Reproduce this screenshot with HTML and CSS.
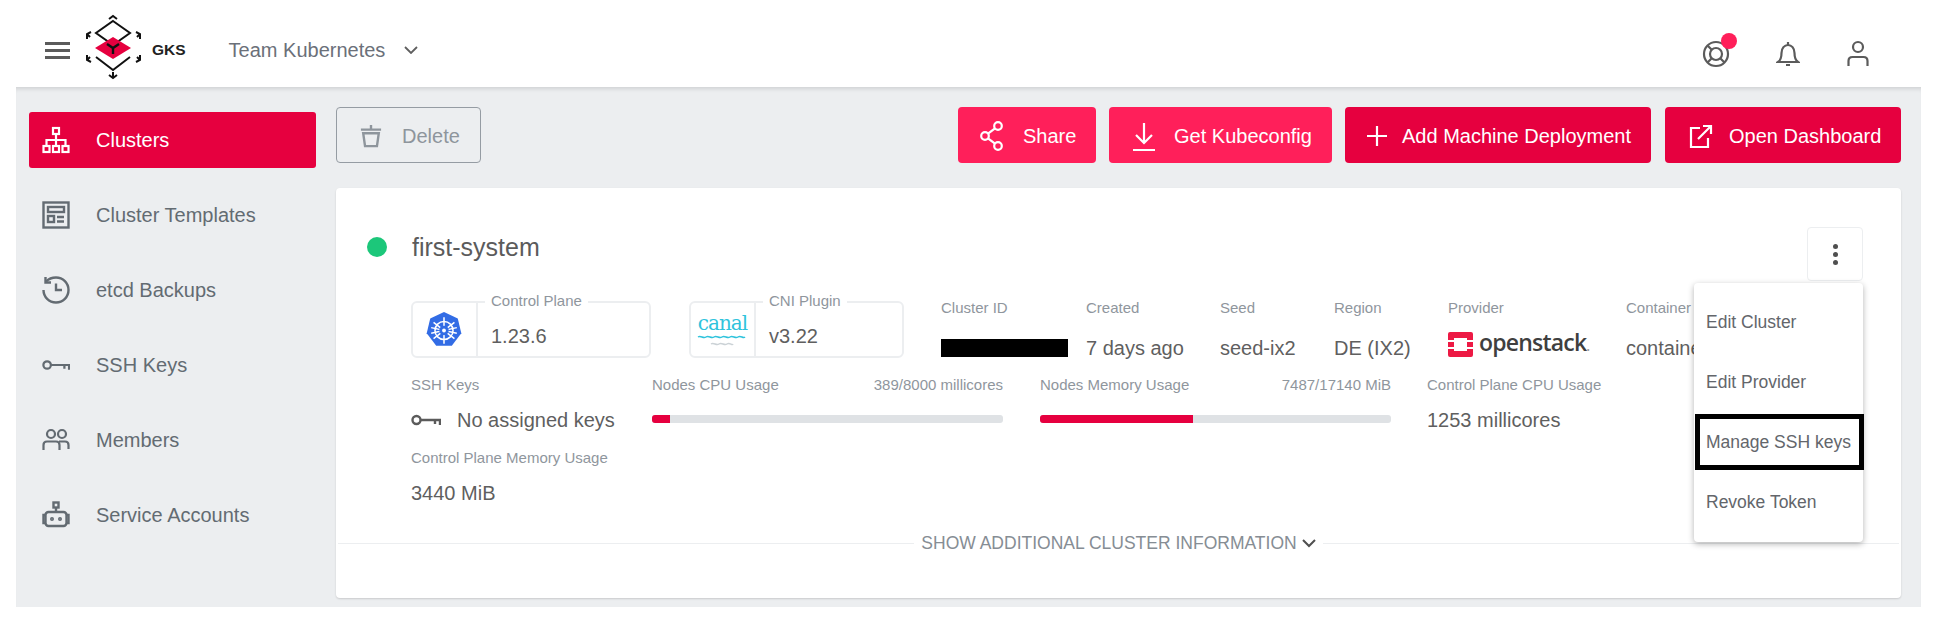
FILE: index.html
```html
<!DOCTYPE html>
<html lang="en">

<head>
    <meta charset="utf-8">
    <meta name="viewport" content="width=device-width, initial-scale=1.0">
    <title>Clusters - GKS</title>
    <link rel="stylesheet" href="styles.css">
</head>

<body>
    <header class="topbar">
        <div class="burger"><span></span><span></span><span></span></div>
        <svg class="logo" viewBox="85 16 60 68" width="60" height="68" fill="none" stroke="#111" stroke-width="2">
            <path d="M113 24l17 12-17 12-17-12z" />
            <path d="M96 60l17 13 17-13" />
            <path d="M113 40l18 11-18 11-18-11z" fill="#e6003f" stroke="none" />
            <path d="M107 47l6 4 6-4M113 51v6" stroke-width="2.4" />
            <path d="M109 22l4-3 4 3" />
            <path d="M113 75v6M109 78l4 3 4-3" />
            <path d="M91 35l-4 2v5M87 37l3 3" />
            <path d="M136 35l4 2v5M140 37l-3 3" />
            <path d="M87 58v5l4 2M87 63l3-3" />
            <path d="M140 58v5l-4 2M140 63l-3-3" />
        </svg>
        <span class="brand">GKS</span>
        <span class="team">Team Kubernetes</span>
        <svg class="team-caret" viewBox="0 0 14 8" width="14" height="8" fill="none" stroke="#5f5f5f" stroke-width="1.8">
            <path d="M1 1l6 6 6-6" />
        </svg>
        <div class="top-icons">
            <div class="help">
                <svg viewBox="0 0 28 28" width="28" height="28" fill="none" stroke="#5b5b5b" stroke-width="2.2">
                    <circle cx="14" cy="14" r="12" />
                    <circle cx="14" cy="14" r="6" />
                    <path d="M5.500 5.500l4.500 4.500M22.500 22.500L18 18M5.500 22.500L10 18" />
                </svg>
                <span class="help-dot"></span>
            </div>
            <svg viewBox="0 0 24 28" width="24" height="28" fill="none" stroke="#5b5b5b" stroke-width="2.200">
                <path d="M2 22c3-2 3.500-5 3.500-9 0-5 3-8 6.500-8s6.500 3 6.500 8c0 4 .5 7 3.500 9z" />
                <path d="M12 2v3M10 25h4" />
            </svg>
            <svg viewBox="0 0 24 28" width="24" height="28" fill="none" stroke="#5b5b5b" stroke-width="2.200">
                <circle cx="12" cy="7" r="5" />
                <path d="M2.500 26v-5c0-2.500 1.500-4 4-4h11c2.500 0 4 1.500 4 4v5" />
            </svg>
        </div>
    </header>

    <div class="layout">
        <nav class="sidebar">
            <a class="nav-item active">
                <svg viewBox="0 0 28 28" width="28" height="28" fill="none" stroke="currentColor" stroke-width="2.200">
                    <rect x="11" y="2" width="6" height="6" />
                    <rect x="1.500" y="20" width="6" height="6" />
                    <rect x="11" y="20" width="6" height="6" />
                    <rect x="20.500" y="20" width="6" height="6" />
                    <path d="M14 8v12M4.500 20v-6h19v6" />
                </svg>
                Clusters
            </a>
            <a class="nav-item">
                <svg viewBox="0 0 28 28" width="28" height="28" fill="none" stroke="currentColor" stroke-width="2.400">
                    <rect x="1.500" y="1.500" width="25" height="25" />
                    <rect x="6" y="6" width="16" height="5" />
                    <rect x="6" y="15" width="6" height="6" />
                    <path d="M15 16h7M15 20.500h7" />
                </svg>
                Cluster Templates
            </a>
            <a class="nav-item">
                <svg viewBox="0 0 28 28" width="28" height="28" fill="none" stroke="currentColor" stroke-width="2.400">
                    <path d="M4 5.500C6.500 3 10 1.500 14 1.500 21 1.500 26.500 7 26.500 14S21 26.500 14 26.500 1.500 21 1.500 14" />
                    <path d="M3.500 1v5.500H9" />
                    <path d="M14 7.500V14h6" />
                </svg>
                etcd Backups
            </a>
            <a class="nav-item">
                <svg viewBox="0 0 30 14" width="30" height="14" fill="none" stroke="currentColor" stroke-width="2.400">
                    <circle cx="5.500" cy="7" r="4" />
                    <path d="M9.500 7H29v5M24 7v4" />
                </svg>
                SSH Keys
            </a>
            <a class="nav-item">
                <svg viewBox="0 0 28 24" width="28" height="24" fill="none" stroke="currentColor" stroke-width="2.200">
                    <circle cx="9" cy="6" r="4" />
                    <circle cx="20" cy="6" r="4" />
                    <path d="M1.500 22v-5c0-2 1.500-3.500 3.500-3.500h9c2 0 3.500 1.500 3.500 3.500v5" />
                    <path d="M17 13.500h6c2 0 3.500 1.500 3.500 3.500v4" />
                </svg>
                Members
            </a>
            <a class="nav-item">
                <svg viewBox="0 0 28 28" width="28" height="28" fill="none" stroke="currentColor" stroke-width="2.400">
                    <rect x="11.500" y="1.500" width="5" height="5" />
                    <path d="M14 6.500V11" />
                    <rect x="3.500" y="11" width="21" height="14" rx="3" />
                    <path d="M3.500 14H1.500v8h2M24.500 14h2v8h-2" />
                    <circle cx="10" cy="18" r=".8" />
                    <circle cx="18" cy="18" r=".8" />
                </svg>
                Service Accounts
            </a>
        </nav>

        <main class="content">
            <div class="toolbar">
                <button class="btn btn-delete">
                    <svg viewBox="0 0 24 26" width="22" height="24" fill="none" stroke="currentColor" stroke-width="2.600">
                        <path d="M1 6h22M12 1v5" />
                        <path d="M3.500 10l2 14h13l2-14z" />
                    </svg>
                    Delete
                </button>
                <div class="actions">
                    <button class="btn btn-light btn-share">
                        <svg viewBox="0 0 24 30" width="24" height="30" fill="none" stroke="currentColor" stroke-width="2.200">
                            <circle cx="5" cy="15" r="3.800" />
                            <circle cx="18" cy="5" r="3.800" />
                            <circle cx="18" cy="25" r="3.800" />
                            <path d="M8 12.700l7-5.400M8 17.300l7 5.400" />
                        </svg>
                        Share
                    </button>
                    <button class="btn btn-light btn-kube">
                        <svg viewBox="0 0 24 30" width="24" height="30" fill="none" stroke="currentColor" stroke-width="2.200">
                            <path d="M12 2v20M4 14l8 8 8-8M1 29h22" />
                        </svg>
                        Get Kubeconfig
                    </button>
                    <button class="btn btn-dark btn-add">
                        <svg viewBox="0 0 22 22" width="22" height="22" fill="none" stroke="currentColor" stroke-width="2.200">
                            <path d="M11 1v20M1 11h20" />
                        </svg>
                        Add Machine Deployment
                    </button>
                    <button class="btn btn-dark btn-open">
                        <svg viewBox="0 0 24 24" width="24" height="24" fill="none" stroke="currentColor" stroke-width="2.200">
                            <path d="M11 4H2v19h17v-9" />
                            <path d="M9 15L22 2M14 2h8v8" />
                        </svg>
                        Open Dashboard
                    </button>
                </div>
            </div>

            <section class="card">
                <div class="title-row">
                    <span class="status-dot"></span>
                    <h1>first-system</h1>
                    <button class="kebab"><span></span><span></span><span></span></button>
                </div>

                <div class="row row-one">
                    <div class="tag-box">
                        <span class="tag-label">Control Plane</span>
                        <div class="tag-logo">
                            <svg viewBox="0 0 40 40" width="38" height="38">
                                <path d="M20 1l14.500 7 3.700 15.500-10 13H11.800l-10-13L5.500 8z" fill="#326ce5" />
                                <g fill="none" stroke="#fff" stroke-width="1.600">
                                    <circle cx="20" cy="20.500" r="9.500" />
                                    <path d="M20 6.500v28M9 12l22 17M31 12L9 29M6.500 23.500l27-6M33.500 23.500l-27-6" />
                                </g>
                                <circle cx="20" cy="20.500" r="5" fill="#326ce5" />
                                <circle cx="20" cy="20.500" r="2" fill="#fff" />
                            </svg>
                        </div>
                        <span class="tag-value">1.23.6</span>
                    </div>
                    <div class="tag-box">
                        <span class="tag-label">CNI Plugin</span>
                        <div class="tag-logo canal">
                            <span class="canal-name">canal</span>
                            <svg viewBox="0 0 50 14" width="50" height="14" fill="none" stroke-width="1.500">
                                <path d="M1 3c3-2 5 2 8 0s5 2 8 0 5 2 8 0 5 2 8 0 5 2 8 0 5 2 7 0" stroke="#2fc3dc" />
                                <path d="M14 10c3-2 5 2 8 0s5 2 8 0 5 2 6 0" stroke="#cbd2d6" />
                            </svg>
                        </div>
                        <span class="tag-value">v3.22</span>
                    </div>
                    <div class="info">
                        <span class="label">Cluster ID</span>
                        <span class="value redacted"></span>
                    </div>
                    <div class="info">
                        <span class="label">Created</span>
                        <span class="value">7 days ago</span>
                    </div>
                    <div class="info">
                        <span class="label">Seed</span>
                        <span class="value">seed-ix2</span>
                    </div>
                    <div class="info">
                        <span class="label">Region</span>
                        <span class="value">DE (IX2)</span>
                    </div>
                    <div class="info">
                        <span class="label">Provider</span>
                        <div class="openstack">
                            <svg viewBox="0 0 25 25" width="25" height="25">
                                <path d="M2 0h21a2 2 0 0 1 2 2v6h-6V6H6v2H0V2a2 2 0 0 1 2-2zM0 10h6v5H0zM19 10h6v5h-6zM0 17h6v2h13v-2h6v6a2 2 0 0 1-2 2H2a2 2 0 0 1-2-2z" fill="#ed1944" />
                            </svg>
                            <span>openstack<small>.</small></span>
                        </div>
                    </div>
                    <div class="info">
                        <span class="label">Container</span>
                        <span class="value">containerd</span>
                    </div>
                </div>

                <div class="row row-two">
                    <div class="info">
                        <span class="label">SSH Keys</span>
                        <span class="value ssh-value">
                            <svg viewBox="0 0 30 14" width="30" height="14" fill="none" stroke="#5b5b5b" stroke-width="2.400">
                                <circle cx="5.500" cy="7" r="4" />
                                <path d="M9.500 7H29v5M24 7v4" />
                            </svg>
                            No assigned keys
                        </span>
                    </div>
                    <div class="usage">
                        <div class="usage-head">
                            <span class="label">Nodes CPU Usage</span>
                            <span class="label">389/8000 millicores</span>
                        </div>
                        <div class="bar"><div class="bar-fill" style="width: 5%"></div></div>
                    </div>
                    <div class="usage">
                        <div class="usage-head">
                            <span class="label">Nodes Memory Usage</span>
                            <span class="label">7487/17140 MiB</span>
                        </div>
                        <div class="bar"><div class="bar-fill" style="width: 43.700%"></div></div>
                    </div>
                    <div class="info">
                        <span class="label">Control Plane CPU Usage</span>
                        <span class="value">1253 millicores</span>
                    </div>
                </div>

                <div class="row row-three">
                    <div class="info">
                        <span class="label">Control Plane Memory Usage</span>
                        <span class="value">3440 MiB</span>
                    </div>
                </div>

                <div class="more">
                    <span>SHOW ADDITIONAL CLUSTER INFORMATION</span>
                    <svg viewBox="0 0 14 9" width="14" height="9" fill="none" stroke="#4f4f4f" stroke-width="2">
                        <path d="M1 1l6 6 6-6" />
                    </svg>
                </div>

                <ul class="menu">
                    <li>Edit Cluster</li>
                    <li>Edit Provider</li>
                    <li class="marked">Manage SSH keys</li>
                    <li>Revoke Token</li>
                </ul>
            </section>
        </main>
    </div>
</body>

</html>
```

FILE: styles.css
```css
* {
    box-sizing: border-box;
}

html,
body {
    height: 100%;
}

body {
    margin: 0;
    overflow: hidden;
    background-color: #fff;
    color: #5f5f5f;
    font-family: "Liberation Sans", Arial, sans-serif;
}

/* top bar */
.topbar {
    display: flex;
    align-items: center;
    height: 87px;
    padding: 13px 0 0 45px;
    background-color: #fff;
}

.burger {
    display: flex;
    flex-direction: column;
    gap: 4px;
    width: 25px;
}

.burger span {
    height: 3px;
    background-color: #5b5b5b;
}

.logo {
    margin-left: 15px;
    margin-top: -7px;
}

.brand {
    margin-left: 7px;
    color: #222;
    font-size: 15.500px;
    font-weight: bold;
}

.team {
    margin-left: 43px;
    color: #6b7079;
    font-size: 20px;
}

.team-caret {
    margin-left: 19px;
}

.top-icons {
    display: flex;
    align-items: center;
    gap: 46px;
    margin-left: auto;
    margin-top: 7px;
    padding-right: 65px;
}

.help {
    position: relative;
    display: flex;
}

.help-dot {
    position: absolute;
    top: -7px;
    right: -7px;
    width: 16px;
    height: 16px;
    border-radius: 50%;
    background-color: #ff1f5a;
}

/* page */
.layout {
    display: flex;
    height: 520px;
    margin: 0 14px 0 16px;
    background-color: #eceef0;
    box-shadow: inset 0 5px 4px -3px rgba(0, 0, 0, 0.12);
}

.sidebar {
    display: flex;
    flex-direction: column;
    gap: 19px;
    width: 300px;
    padding: 25px 0 0 13px;
    flex-shrink: 0;
}

.nav-item {
    display: flex;
    align-items: center;
    height: 56px;
    padding-left: 13px;
    color: #636b72;
    font-size: 20px;
    border-radius: 3px;
}

.nav-item svg {
    width: 28px;
    margin-right: 26px;
}

.active {
    background-color: #e6003f;
    color: #fff;
}

.content {
    flex: 1;
    padding: 20px 20px 0 20px;
}

.toolbar {
    display: flex;
    justify-content: space-between;
}

.actions {
    display: flex;
    gap: 13px;
}

.btn {
    display: flex;
    align-items: center;
    height: 56px;
    padding-top: 3px;
    border: 0;
    border-radius: 4px;
    color: #fff;
    font-family: inherit;
    font-size: 20px;
}

.btn-delete {
    width: 145px;
    padding-left: 23px;
    gap: 20px;
    border: 1.5px solid #959ca3;
    background-color: transparent;
    color: #8e959c;
}

.btn-light {
    background-color: #ff1f5a;
}

.btn-dark {
    background-color: #e6003f;
}

.btn-share {
    width: 138px;
    padding-left: 22px;
    gap: 19px;
}

.btn-kube {
    width: 223px;
    padding-left: 23px;
    gap: 18px;
}

.btn-add {
    width: 306px;
    padding-left: 21px;
    gap: 14px;
}

.btn-open {
    width: 236px;
    padding-left: 24px;
    gap: 16px;
    margin-left: 1px;
}

/* cluster card */
.card {
    position: relative;
    height: 410px;
    margin-top: 25px;
    padding-top: 45px;
    background-color: #fff;
    border-radius: 4px;
    box-shadow: 0 1px 2px rgba(0, 0, 0, 0.15);
}

.title-row {
    display: flex;
    align-items: center;
    height: 28px;
    padding-left: 31px;
}

.status-dot {
    width: 20px;
    height: 20px;
    border-radius: 50%;
    background-color: #1cc77a;
}

h1 {
    margin: 0 0 0 25px;
    color: #5b5b5b;
    font-size: 25px;
    font-weight: normal;
}

.kebab {
    position: absolute;
    top: 39px;
    right: 38px;
    display: flex;
    flex-direction: column;
    align-items: center;
    justify-content: center;
    gap: 3px;
    width: 56px;
    height: 54px;
    padding: 0;
    border: 1px solid #eceef0;
    border-radius: 4px;
    background-color: #fff;
}

.kebab span {
    width: 5px;
    height: 5px;
    border-radius: 50%;
    background-color: #4f4f4f;
}

.row {
    display: grid;
    padding-left: 75px;
}

.row-one {
    grid-template-columns: 278px 252px 145px 134px 114px 114px 178px 200px;
    margin-top: 40px;
    height: 57px;
}

.row-one .tag-box:nth-child(2) {
    width: 215px;
}

.row-two {
    grid-template-columns: 241px 388px 387px 300px;
    margin-top: 18px;
}

.row-three {
    margin-top: 17px;
}

.tag-box {
    position: relative;
    display: flex;
    align-items: center;
    width: 240px;
    height: 57px;
    border: 2px solid #eceef0;
    border-radius: 6px;
}

.tag-label {
    position: absolute;
    top: -11px;
    left: 72px;
    padding: 0 6px;
    background-color: #fff;
    color: #8f969d;
    font-size: 15px;
    line-height: 18px;
}

.tag-logo {
    display: flex;
    align-items: center;
    justify-content: center;
    width: 65px;
    height: 100%;
    border-right: 2px solid #eceef0;
    flex-shrink: 0;
}

.tag-logo svg {
    margin-right: 2px;
}

.canal {
    flex-direction: column;
}

.canal-name {
    color: #2fc3dc;
    font-family: "DejaVu Serif", serif;
    font-size: 20px;
    line-height: 22px;
    letter-spacing: -1px;
}

.tag-value {
    margin-left: 13px;
    margin-top: 13px;
    font-size: 20px;
}

.info {
    display: flex;
    flex-direction: column;
}

.label {
    color: #8f969d;
    font-size: 15px;
    line-height: 18px;
}

.row-one .label {
    margin-top: -2px;
}

.value {
    margin-top: 19px;
    font-size: 20px;
    line-height: 24px;
}

.row-two .value,
.row-three .value {
    margin-top: 14px;
}

.redacted {
    width: 127px;
    height: 18px;
    margin-top: 22px;
    background-color: #000;
}

.openstack {
    display: flex;
    align-items: center;
    gap: 6px;
    margin-top: 13px;
    color: #3f3f3f;
    font-family: "Open Sans", sans-serif;
    font-size: 23px;
    font-weight: 600;
    line-height: 25px;
    letter-spacing: -0.8px;
}

.openstack small {
    color: #9a9a9a;
    font-size: 14px;
}

.ssh-value {
    display: flex;
    align-items: center;
    gap: 16px;
}

.usage {
    width: 351px;
}

.usage-head {
    display: flex;
    justify-content: space-between;
}

.bar {
    height: 8px;
    margin-top: 21px;
    background-color: #dfe2e5;
    border-radius: 3px;
    overflow: hidden;
}

.bar-fill {
    height: 100%;
    background-color: #e6003f;
}

.more {
    position: relative;
    display: flex;
    align-items: center;
    justify-content: center;
    gap: 5px;
    margin-top: 28px;
    color: #868d94;
    font-size: 17.500px;
}

.more::before,
.more::after {
    content: "";
    flex: 1;
    height: 1.500px;
    margin: 0 2px;
    background-color: #eceef0;
}

/* popup menu */
.menu {
    position: absolute;
    top: 95px;
    right: 38px;
    width: 169px;
    height: 259px;
    margin: 0;
    padding: 9px 0;
    list-style: none;
    background-color: #fff;
    border-radius: 4px;
    box-shadow: 0 2px 6px rgba(0, 0, 0, 0.3);
    font-size: 17.500px;
    color: #63666b;
}

.menu li {
    display: flex;
    align-items: center;
    height: 60px;
    padding-left: 12px;
}

.menu .marked {
    height: 56px;
    margin: 2px -1px 2px 1px;
    padding-left: 6px;
    border: 5px solid #000;
}
```
